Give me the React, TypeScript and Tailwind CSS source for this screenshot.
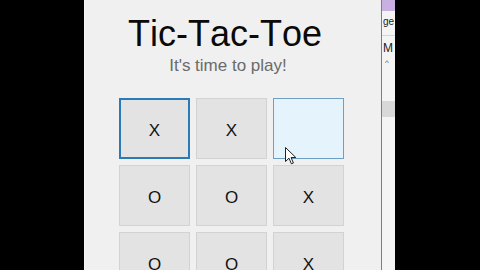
import React from "react";

const cells: { v: string; kind: "focus" | "hover" | "normal" }[] = [
  { v: "X", kind: "focus" },
  { v: "X", kind: "normal" },
  { v: "", kind: "hover" },
  { v: "O", kind: "normal" },
  { v: "O", kind: "normal" },
  { v: "X", kind: "normal" },
  { v: "O", kind: "normal" },
  { v: "O", kind: "normal" },
  { v: "X", kind: "normal" },
];

function Cell({ v, kind }: { v: string; kind: string }) {
  const cls =
    kind === "focus"
      ? "border-2 border-[#2a7ab8] bg-[#e3e3e3]"
      : kind === "hover"
      ? "border border-[#6f9fc4] bg-[#e5f3fd]"
      : "border border-[#d2d2d2] bg-[#e3e3e3]";
  return (
    <div
      className={`relative flex h-[61px] w-[71px] items-center justify-center pt-[4px] text-[17px] text-[#111] ${cls}`}
    >
      {v}
    </div>
  );
}

export default function App() {
  return (
    <div
      className="flex h-[270px] w-[480px] overflow-hidden bg-black"
      style={{ fontFamily: '"Liberation Sans", Arial, sans-serif', fontKerning: "none" }}
    >
      <div className="w-[84px] shrink-0 bg-black" />
      <div className="relative flex w-[297px] shrink-0 flex-col border-l border-[#f7f7f7] bg-[#f0f0f0]">
        <div className="mt-[14px] mr-[16px] text-center text-[36px] leading-[40px] text-[#0a0a0a]">
          Tic-Tac-Toe
        </div>
        <div className="mt-[2px] mr-[10px] text-center text-[17px] leading-[20px] text-[#6a6a6a]">
          It's time to play!
        </div>
        <div className="mt-[22px] ml-[34px] grid grid-cols-[71px_71px_71px] gap-x-[6px] gap-y-[6px]">
          {cells.map((c, i) => (
            <Cell key={i} v={c.v} kind={c.kind} />
          ))}
        </div>
        <svg
          className="absolute left-[200px] top-[147px]"
          width="12"
          height="18"
          viewBox="0 0 12 18"
        >
          <path
            d="M0.5 0.5 L0.5 14.5 L4 11.2 L6.4 16.8 L8.4 16 L6.1 10.5 L10.8 10.5 Z"
            fill="#fff"
            stroke="#222"
            strokeWidth="1"
            strokeLinejoin="round"
          />
        </svg>
      </div>
      <div className="w-px shrink-0 bg-[#5b86a8]" />
      <div className="flex w-[13px] shrink-0 flex-col bg-[#f4f4f4] text-[10px] leading-none text-[#222]">
        <div className="h-[11px] bg-[#c9b0e3]" />
        <div className="mt-[6px] pl-[1px]">ge</div>
        <div className="mt-[8px] h-px bg-[#cfd6dc]" />
        <div className="mt-[6px] pl-[1px] text-[12px]">M</div>
        <div className="mt-[5px] pl-[3px] text-[8px] text-[#555]">^</div>
        <div className="mt-[34px] h-[16px] bg-[#d8d8d8]" />
      </div>
      <div className="flex-1 bg-black" />
    </div>
  );
}
